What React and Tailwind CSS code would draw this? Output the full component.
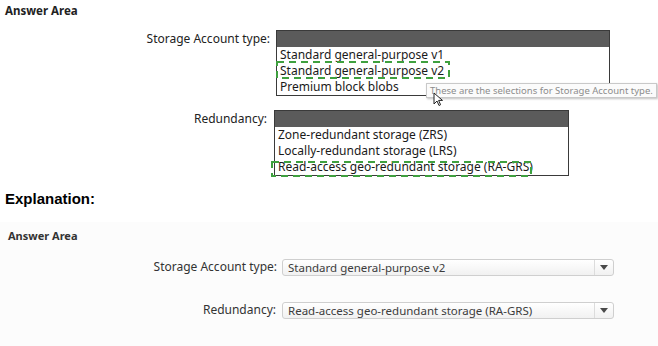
import React from 'react';

const ui = { fontFamily: '"Noto Sans", "Open Sans", sans-serif' };

// ─── Open list box (top answer area) ───────────────────────────────
const ListBox = ({ items, width }) => (
  <div className="border border-[#3a3a3a] bg-white" style={{ width }}>
    <div className="h-4 bg-[#5b5b5b]" />
    {items.map((item) => (
      <div key={item} className="h-4 px-[3px] text-[12px] leading-4 text-[#1a1a1a]">
        {item}
      </div>
    ))}
  </div>
);

// ─── Dashed highlight (annotation drawn over the list) ─────────────
const Dashed = ({ className, w, h }) => (
  <svg className={`pointer-events-none absolute ${className}`} width={w} height={h}>
    <rect
      x="1"
      y="1"
      width={w - 2}
      height={h - 2}
      fill="none"
      stroke="#3fa03f"
      strokeWidth="2"
      strokeDasharray="7 5"
    />
  </svg>
);

// ─── Closed select (explanation area) ──────────────────────────────
const Select = ({ value }) => (
  <div className="flex h-[17px] w-[332px] items-stretch rounded-[3px] border border-[#cfcfcf] bg-gradient-to-b from-white to-[#f1f1f1]">
    <div className="flex-1 truncate pl-[5px] text-[11.5px] leading-[15px] text-[#3c3c3c]">{value}</div>
    <div className="flex w-[19px] items-center justify-center border-l border-[#dcdcdc]">
      <svg width="8" height="5" viewBox="0 0 8 5">
        <path d="M0 0h8L4 5z" fill="#4a4a4a" />
      </svg>
    </div>
  </div>
);

const App = () => (
  <div className="relative h-[346px] w-[658px] overflow-hidden bg-white" style={ui}>
    {/* Answer Area */}
    <div className="px-[5px] pt-[3px] text-[11.5px] font-bold leading-4 text-[#222]">Answer Area</div>

    <div className="mt-[11px] flex items-start">
      <div className="w-[270px] pt-[1px] text-right text-[12px] leading-4 text-[#222]">Storage Account type:</div>
      <div className="relative ml-[6px]">
        <ListBox
          width={334}
          items={['Standard general-purpose v1', 'Standard general-purpose v2', 'Premium block blobs']}
        />
        <Dashed className="left-[0px] top-[31px]" w={174} h={18} />
        {/* tooltip */}
        <div className="absolute left-[150px] top-[53px] whitespace-nowrap border border-[#c9c9c9] bg-[#fbfbfb] px-[3px] text-[9.5px] leading-[13px] text-[#8c8c8c] shadow-[1px_1px_2px_rgba(0,0,0,0.25)]">
          These are the selections for Storage Account type.
        </div>
        <svg className="absolute left-[157px] top-[62px]" width="10" height="15" viewBox="0 0 10 15">
          <path d="M1 1v11l3-3 2 4.5 1.6-.8-2-4.3H9.5z" fill="#fff" stroke="#222" strokeWidth="1" strokeLinejoin="round" />
        </svg>
      </div>
    </div>

    <div className="mt-[14px] flex items-start">
      <div className="w-[267px] pt-[1px] text-right text-[12px] leading-4 text-[#222]">Redundancy:</div>
      <div className="relative ml-[7px]">
        <ListBox
          width={295}
          items={['Zone-redundant storage (ZRS)', 'Locally-redundant storage (LRS)', 'Read-access geo-redundant storage (RA-GRS)']}
        />
        <Dashed className="left-[-3px] top-[51px]" w={261} h={16} />
      </div>
    </div>

    {/* Explanation */}
    <div
      className="mt-[14px] px-[5px] text-[15px] font-bold leading-[18px] text-black"
      style={{ fontFamily: '"Liberation Sans", Arial, sans-serif' }}
    >
      Explanation:
    </div>

    <div className="mt-[14px] bg-[#fcfcfc] pt-[6px]">
      <div className="px-[8px] text-[11px] font-bold leading-4 text-[#333]">Answer Area</div>

      <div className="mt-[14px] flex items-center">
        <div className="w-[277px] text-right text-[12px] text-[#333]">Storage Account type:</div>
        <div className="ml-[5px]">
          <Select value="Standard general-purpose v2" />
        </div>
      </div>

      <div className="mt-[25px] flex items-center pb-[30px]">
        <div className="w-[276px] text-right text-[12px] text-[#333]">Redundancy:</div>
        <div className="ml-[6px]">
          <Select value="Read-access geo-redundant storage (RA-GRS)" />
        </div>
      </div>
    </div>
  </div>
);

export default App;
